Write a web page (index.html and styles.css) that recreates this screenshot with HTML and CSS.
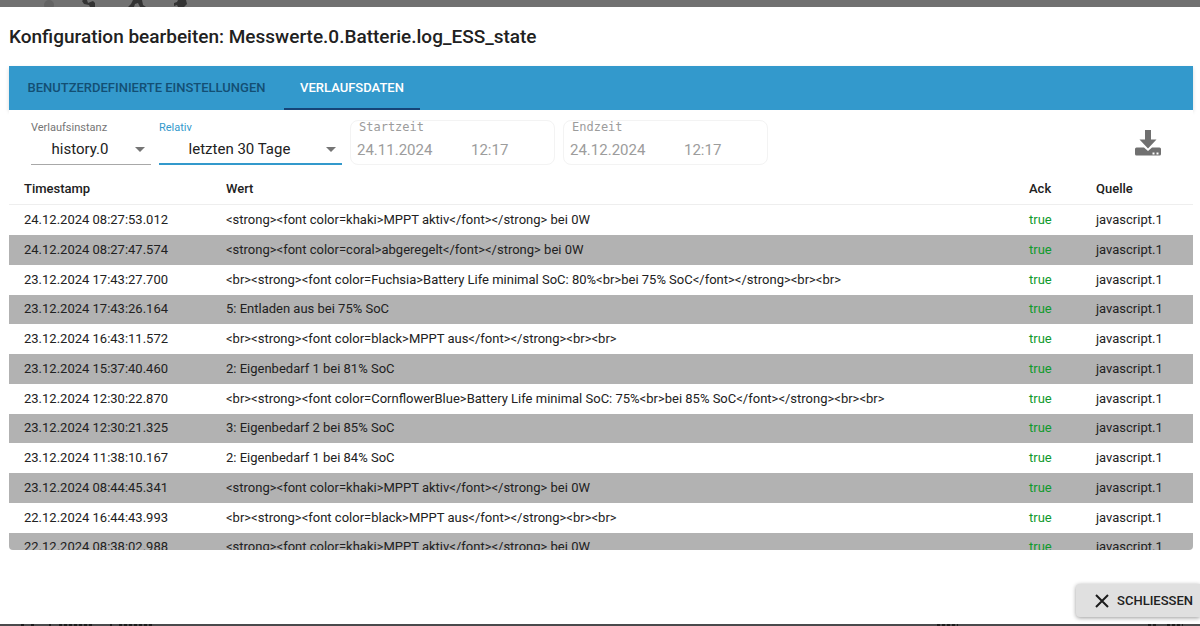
FILE: index.html
```html
<!DOCTYPE html>
<html lang="de">
<head>
<meta charset="utf-8">
<meta name="viewport" content="width=device-width, initial-scale=1">
<title>Konfiguration bearbeiten</title>
<link rel="stylesheet" href="styles.css">
</head>
<body>
<div class="backdrop-top" aria-hidden="true">
  <svg width="200" height="7" viewBox="0 0 200 7"><ellipse cx="49" cy="5" rx="5" ry="5" fill="#636363"/><path d="M83 0h4l1 3 5-2 2 2v4h-5l-1-2-5-1-2-3zM133 0h9l1 5 3 2h-6l-2-4-3 1-1 3h-6l3-3zM178 0h8l1 4-3 3h-6l-1-2-3 1v-3l3-1z" fill="#333"/></svg>
</div>
<main class="dialog" role="dialog" aria-labelledby="title">
  <h1 class="title" id="title">Konfiguration bearbeiten: Messwerte.0.Batterie.log_ESS_state</h1>
  <section class="panel">
    <div class="tabs" role="tablist">
      <button class="tab tab-settings" role="tab" aria-selected="false">BENUTZERDEFINIERTE EINSTELLUNGEN</button>
      <button class="tab tab-history" role="tab" aria-selected="true">VERLAUFSDATEN</button>
    </div>
    <form class="toolbar">
      <div class="field field-instance">
        <label class="field-label" for="instance">Verlaufsinstanz</label>
        <div class="select-wrap">
          <select class="select" id="instance"><option>history.0</option></select>
          <svg class="arrow" width="10" height="5" viewBox="0 0 10 5"><path d="M0 0h10L5 5z" fill="#757575"/></svg>
        </div>
      </div>
      <div class="field field-relative">
        <label class="field-label" for="relative">Relativ</label>
        <div class="select-wrap">
          <select class="select" id="relative"><option>letzten 30 Tage</option></select>
          <svg class="arrow" width="10" height="5" viewBox="0 0 10 5"><path d="M0 0h10L5 5z" fill="#757575"/></svg>
        </div>
      </div>
      <div class="range">
        <label class="range-label" for="start-date">Startzeit</label>
        <div class="range-inputs">
          <input class="range-date" id="start-date" type="text" value="24.11.2024" disabled>
          <input class="range-time" type="text" value="12:17" aria-label="Startzeit Uhrzeit" disabled>
        </div>
      </div>
      <div class="range">
        <label class="range-label" for="end-date">Endzeit</label>
        <div class="range-inputs">
          <input class="range-date" id="end-date" type="text" value="24.12.2024" disabled>
          <input class="range-time" type="text" value="12:17" aria-label="Endzeit Uhrzeit" disabled>
        </div>
      </div>
      <button class="download" type="button" aria-label="Herunterladen">
        <svg width="26" height="26" viewBox="0 0 26 26" fill="#707070"><path d="M10 0h6v9.500h5.500L13 18.500 4.500 9.500H10z"/><path fill-rule="evenodd" d="M1.500 17.500h7.500l4 3.500 4-3.500h7.500a1.500 1.500 0 0 1 1.500 1.500v5a1.500 1.500 0 0 1-1.500 1.500h-23A1.500 1.500 0 0 1 0 24v-5a1.500 1.500 0 0 1 1.500-1.500zM17.500 22.500h2v2h-2zM21.500 22.500h2v2h-2z"/></svg>
      </button>
    </form>
    <div class="table-area">
      <table class="history">
        <colgroup><col class="col-time"><col><col class="col-ack"><col class="col-source"></colgroup>
        <thead><tr><th>Timestamp</th><th>Wert</th><th>Ack</th><th>Quelle</th></tr></thead>
        <tbody>
          <tr><td>24.12.2024 08:27:53.012</td><td>&lt;strong&gt;&lt;font color=khaki&gt;MPPT aktiv&lt;/font&gt;&lt;/strong&gt; bei 0W</td><td class="ack">true</td><td>javascript.1</td></tr>
          <tr><td>24.12.2024 08:27:47.574</td><td>&lt;strong&gt;&lt;font color=coral&gt;abgeregelt&lt;/font&gt;&lt;/strong&gt; bei 0W</td><td class="ack">true</td><td>javascript.1</td></tr>
          <tr><td>23.12.2024 17:43:27.700</td><td>&lt;br&gt;&lt;strong&gt;&lt;font color=Fuchsia&gt;Battery Life minimal SoC: 80%&lt;br&gt;bei 75% SoC&lt;/font&gt;&lt;/strong&gt;&lt;br&gt;&lt;br&gt;</td><td class="ack">true</td><td>javascript.1</td></tr>
          <tr><td>23.12.2024 17:43:26.164</td><td>5: Entladen aus bei 75% SoC</td><td class="ack">true</td><td>javascript.1</td></tr>
          <tr><td>23.12.2024 16:43:11.572</td><td>&lt;br&gt;&lt;strong&gt;&lt;font color=black&gt;MPPT aus&lt;/font&gt;&lt;/strong&gt;&lt;br&gt;&lt;br&gt;</td><td class="ack">true</td><td>javascript.1</td></tr>
          <tr><td>23.12.2024 15:37:40.460</td><td>2: Eigenbedarf 1 bei 81% SoC</td><td class="ack">true</td><td>javascript.1</td></tr>
          <tr><td>23.12.2024 12:30:22.870</td><td>&lt;br&gt;&lt;strong&gt;&lt;font color=CornflowerBlue&gt;Battery Life minimal SoC: 75%&lt;br&gt;bei 85% SoC&lt;/font&gt;&lt;/strong&gt;&lt;br&gt;&lt;br&gt;</td><td class="ack">true</td><td>javascript.1</td></tr>
          <tr><td>23.12.2024 12:30:21.325</td><td>3: Eigenbedarf 2 bei 85% SoC</td><td class="ack">true</td><td>javascript.1</td></tr>
          <tr><td>23.12.2024 11:38:10.167</td><td>2: Eigenbedarf 1 bei 84% SoC</td><td class="ack">true</td><td>javascript.1</td></tr>
          <tr><td>23.12.2024 08:44:45.341</td><td>&lt;strong&gt;&lt;font color=khaki&gt;MPPT aktiv&lt;/font&gt;&lt;/strong&gt; bei 0W</td><td class="ack">true</td><td>javascript.1</td></tr>
          <tr><td>22.12.2024 16:44:43.993</td><td>&lt;br&gt;&lt;strong&gt;&lt;font color=black&gt;MPPT aus&lt;/font&gt;&lt;/strong&gt;&lt;br&gt;&lt;br&gt;</td><td class="ack">true</td><td>javascript.1</td></tr>
          <tr><td>22.12.2024 08:38:02.988</td><td>&lt;strong&gt;&lt;font color=khaki&gt;MPPT aktiv&lt;/font&gt;&lt;/strong&gt; bei 0W</td><td class="ack">true</td><td>javascript.1</td></tr>
        </tbody>
      </table>
    </div>
  </section>
  <footer class="actions">
    <button class="close" type="button">
      <svg width="14" height="14" viewBox="0 0 14 14"><path d="M1 1l12 12M13 1L1 13" stroke="#1c1c1c" stroke-width="2" fill="none"/></svg>
      SCHLIESSEN
    </button>
  </footer>
</main>
<div class="backdrop-bottom" aria-hidden="true">
  <svg width="1200" height="2" viewBox="0 0 1200 2"><path d="M21 1h3M31 1h3M49 1h2M59 1h34M110 1h2M119 1h33M937 1h21M1148 1h10M1167 1h16" stroke="#1d1d1d" stroke-width="2" stroke-dasharray="3 2"/></svg>
</div>
</body>
</html>
```
FILE: styles.css
```css
* { box-sizing: border-box; }

body {
  margin: 0;
  height: 100vh;
  display: flex;
  flex-direction: column;
  overflow: hidden;
  background: #717171;
  color: #212121;
  font-family: Roboto, "Liberation Sans", sans-serif;
  font-size: 13px;
}

button, input, select { font: inherit; color: inherit; margin: 0; border: 0; background: none; }
button { cursor: pointer; }

.backdrop-top { flex: none; height: 7px; overflow: hidden; background: #717171; }
.backdrop-top svg, .backdrop-bottom svg { display: block; }
.backdrop-bottom { flex: none; height: 2px; overflow: hidden; background: #4a4a4c; }

.dialog {
  flex: 1;
  min-height: 0;
  display: flex;
  flex-direction: column;
  background: #fff;
}

.title {
  margin: 0;
  padding: 18px 9px 17px;
  font-size: 19px;
  line-height: 24px;
  font-weight: 500;
}

.panel {
  flex: 1;
  min-height: 0;
  margin: 0 7px 0 9px;
  display: flex;
  flex-direction: column;
}

.tabs {
  flex: none;
  display: flex;
  height: 44px;
  background: #3399cc;
  box-shadow: 0 2px 4px rgba(0, 0, 0, 0.15);
}

.tab {
  padding: 0 15px;
  border-bottom: 2px solid transparent;
  color: #134f74;
  font-weight: 500;
}

.tab-settings { min-width: 275px; }
.tab-history { min-width: 136px; color: #fff; border-bottom-color: #164477; }

.toolbar {
  flex: none;
  display: flex;
  align-items: flex-start;
  height: 62px;
  padding: 10px 32px 0 22px;
  gap: 8px;
  background: #fff;
  position: relative;
}

.field { display: flex; flex-direction: column; height: 45px; border-bottom: 1px solid #a8a8a8; }
.field-instance { width: 120px; }
.field-relative { width: 183px; border-bottom: 2px solid #3399cc; }
.field-label { font-size: 11px; line-height: 15px; color: #757575; }
.field-relative .field-label { color: #3399cc; }
.select-wrap { display: grid; align-items: center; height: 28px; }

.select {
  grid-area: 1 / 1;
  appearance: none;
  width: 100%;
  height: 28px;
  padding: 0 22px 0 0;
  font-size: 15px;
  text-align: center;
  text-align-last: center;
}

.arrow { grid-area: 1 / 1; justify-self: end; margin-right: 6px; pointer-events: none; }

.range {
  width: 205px;
  height: 45px;
  padding: 0 6px;
  border: 1px solid #f3f3f3;
  border-radius: 8px;
  color: #9c9c9c;
}

.range-label { display: block; padding-left: 2px; font: 12px/13px "DejaVu Sans Mono", monospace; }
.range-inputs { display: flex; gap: 14px; }
.range-date, .range-time { height: 31px; padding: 0; font-size: 15px; color: #9c9c9c; }
.range-date { width: 100px; }
.range-time { width: 60px; }

.download { margin-left: auto; padding: 10px 0 0; }
.download svg { display: block; }

.table-area { flex: 1; min-height: 0; overflow: hidden; border-radius: 0 0 4px 4px; }

.history { width: 100%; table-layout: fixed; border-collapse: separate; border-spacing: 0; }
.col-time { width: 202px; }
.col-ack { width: 67px; }
.col-source { width: 112px; }

.history th, .history td { height: 30px; padding: 0 0 2px 15px; text-align: left; white-space: nowrap; }
.history th { height: 33px; padding-bottom: 0; font-weight: 500; border-bottom: 1px solid #eee; }
.history tbody tr:nth-child(even) td { background: #b2b2b2; }
.history tbody tr:nth-child(4n) td { height: 29px; }
.history .ack { color: #109a2c; }

.actions { flex: none; display: flex; justify-content: flex-end; padding: 34px 0 7px; }

.close {
  display: flex;
  align-items: center;
  gap: 8px;
  height: 33px;
  padding: 0 7px 0 19px;
  border-radius: 4px 0 0 4px;
  background: #e0e0e0;
  box-shadow: 0 1px 4px rgba(0, 0, 0, 0.4);
  font-weight: 500;
}
```
